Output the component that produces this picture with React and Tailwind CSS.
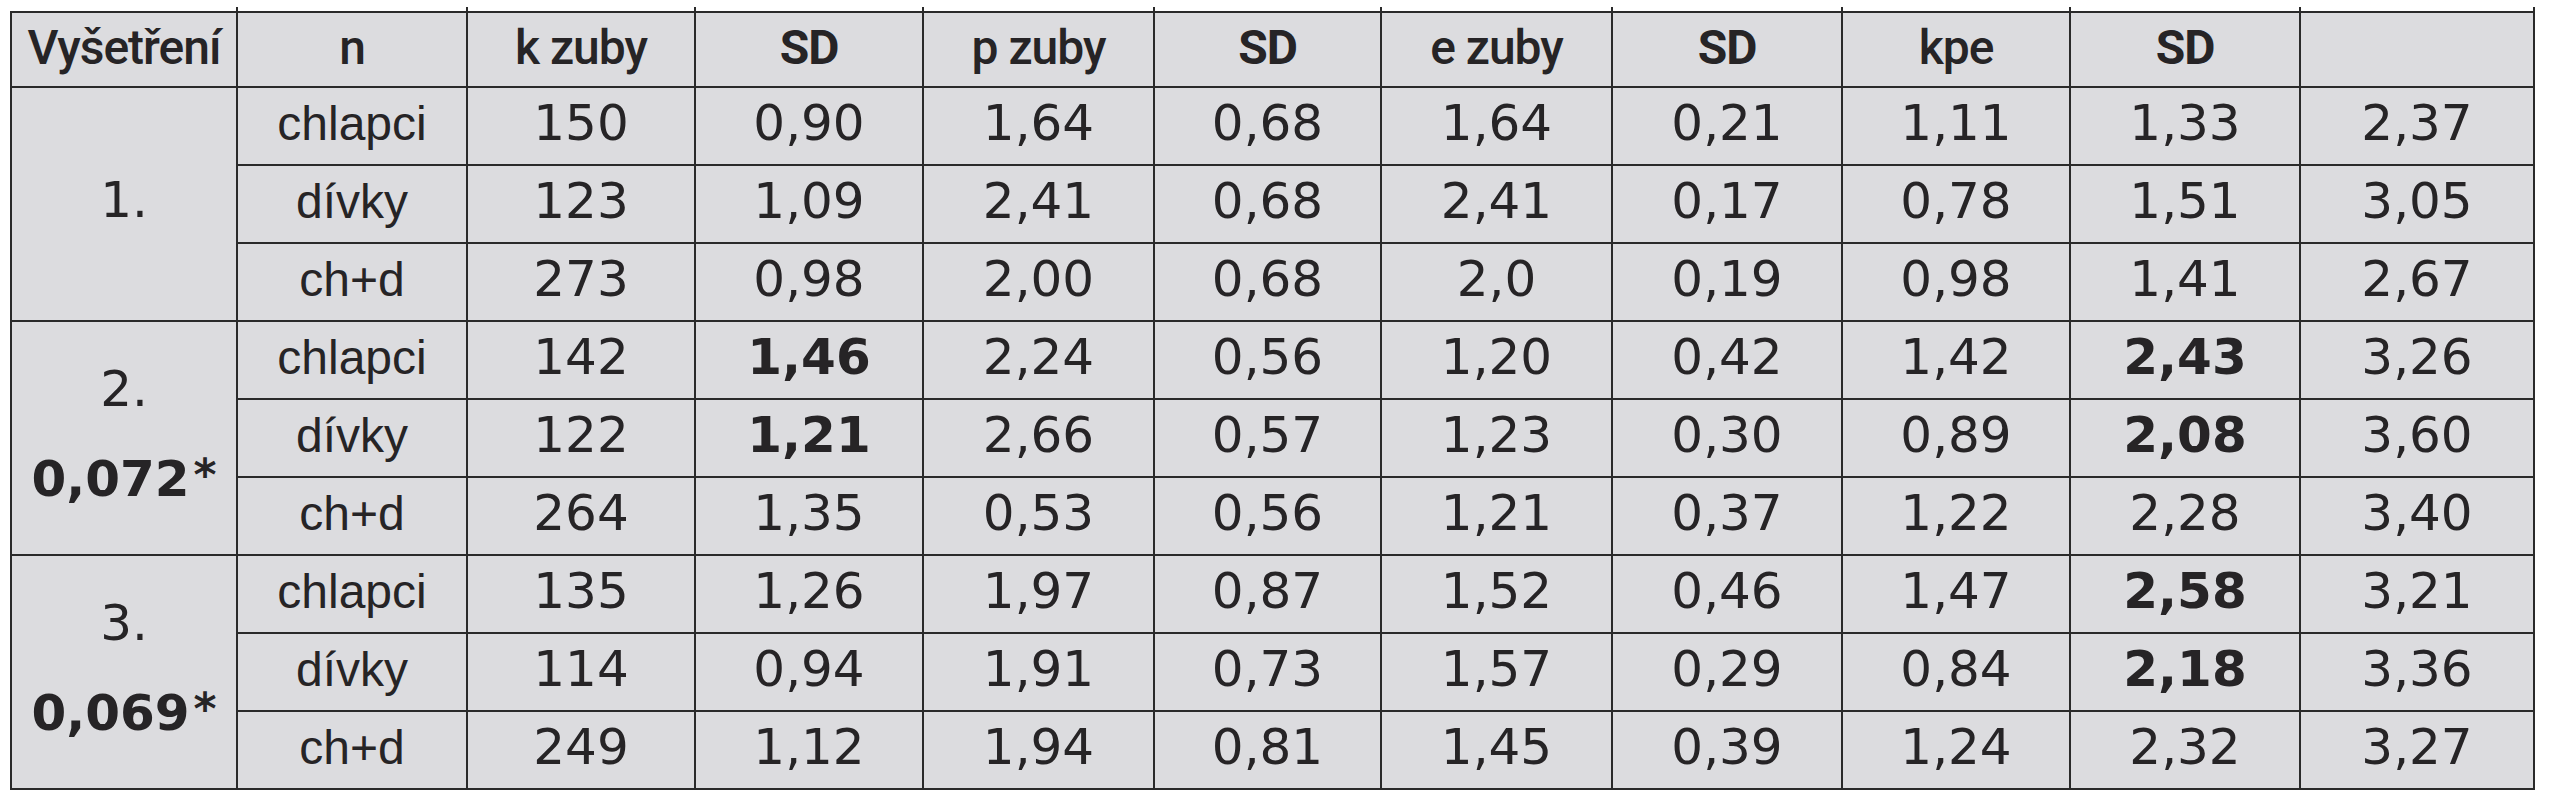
import React from "react";

const head = ["Vyšetření", "n", "k zuby", "SD", "p zuby", "SD", "e zuby", "SD", "kpe", "SD", ""];

const colWidths = [
  "w-[226px]",
  "w-[230px]",
  "w-[228px]",
  "w-[228px]",
  "w-[231px]",
  "w-[227px]",
  "w-[231px]",
  "w-[230px]",
  "w-[228px]",
  "w-[230px]",
  "w-[234px]",
];

// "*" prefix = bold value
const groups = [
  {
    label: ["1."],
    rows: [
      ["chlapci", "150", "0,90", "1,64", "0,68", "1,64", "0,21", "1,11", "1,33", "2,37"],
      ["dívky", "123", "1,09", "2,41", "0,68", "2,41", "0,17", "0,78", "1,51", "3,05"],
      ["ch+d", "273", "0,98", "2,00", "0,68", "2,0", "0,19", "0,98", "1,41", "2,67"],
    ],
  },
  {
    label: ["2.", "0,072"],
    rows: [
      ["chlapci", "142", "*1,46", "2,24", "0,56", "1,20", "0,42", "1,42", "*2,43", "3,26"],
      ["dívky", "122", "*1,21", "2,66", "0,57", "1,23", "0,30", "0,89", "*2,08", "3,60"],
      ["ch+d", "264", "1,35", "0,53", "0,56", "1,21", "0,37", "1,22", "2,28", "3,40"],
    ],
  },
  {
    label: ["3.", "0,069"],
    rows: [
      ["chlapci", "135", "1,26", "1,97", "0,87", "1,52", "0,46", "1,47", "*2,58", "3,21"],
      ["dívky", "114", "0,94", "1,91", "0,73", "1,57", "0,29", "0,84", "*2,18", "3,36"],
      ["ch+d", "249", "1,12", "1,94", "0,81", "1,45", "0,39", "1,24", "2,32", "3,27"],
    ],
  },
];

const cell = "border-2 border-[#2a2a2a] text-center align-middle p-0";
const numFont = "font-['DejaVu_Sans',sans-serif] text-[50px] leading-none";
const textFont = "font-['Liberation_Sans',Arial,sans-serif] text-[48px] leading-none";

function Num({ v }) {
  const bold = v.startsWith("*");
  return <span className={bold ? "font-bold" : "font-normal"}>{bold ? v.slice(1) : v}</span>;
}

export default function App() {
  return (
    <div className="w-[2553px] h-[800px] bg-white pt-[11px] pl-[10px]">
      <table className="table-fixed border-collapse bg-[#dcdcdf] text-[#262426]">
        <colgroup>
          {colWidths.map((w, i) => (
            <col key={i} className={w} />
          ))}
        </colgroup>
        <thead>
          <tr className="h-[75px]">
            {head.map((h, i) => (
              <th
                key={i}
                className={`${cell} relative font-['Roboto','Liberation_Sans',sans-serif] text-[48px] ${
                  h === "SD" ? "font-bold" : "font-medium"
                } tracking-[-1px] leading-none pb-[4px]`}
              >
                {h}
                {/* little tick of the rule poking above the table */}
                <span className="absolute -top-[6px] -right-[2px] w-[2px] h-[5px] bg-[#2a2a2a]" />
              </th>
            ))}
          </tr>
        </thead>
        <tbody>
          {groups.map((g, gi) =>
            g.rows.map((r, ri) => (
              <tr key={`${gi}-${ri}`} className="h-[78px]">
                {ri === 0 && (
                  <td rowSpan={3} className={`${cell} ${numFont}`}>
                    <div className="flex flex-col items-center gap-[40px] pb-[8px]">
                      <span>{g.label[0]}</span>
                      {g.label[1] && (
                        <span className="font-bold">
                          {g.label[1]}
                          <span className="font-bold text-[44px] relative -top-[6px] ml-[4px]">*</span>
                        </span>
                      )}
                    </div>
                  </td>
                )}
                <td className={`${cell} ${textFont} pb-[4px]`}>{r[0]}</td>
                {r.slice(1).map((v, vi) => (
                  <td key={vi} className={`${cell} ${numFont} pb-[6px]`}>
                    <Num v={v} />
                  </td>
                ))}
              </tr>
            ))
          )}
        </tbody>
      </table>
    </div>
  );
}
